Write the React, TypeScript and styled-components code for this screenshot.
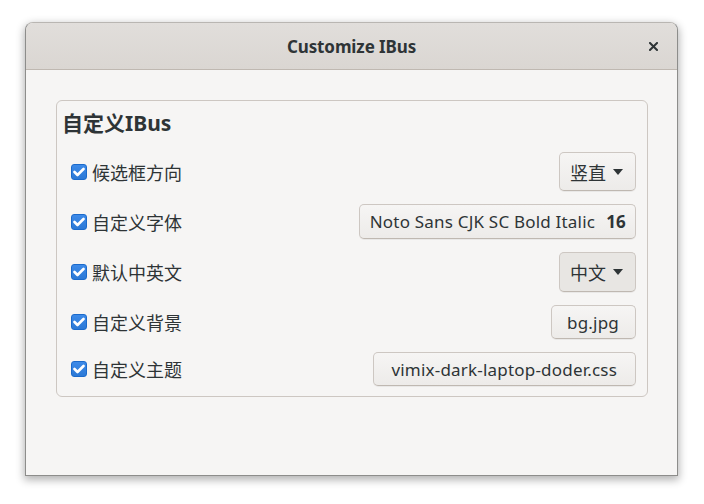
import React from "react";
import styled, { createGlobalStyle } from "styled-components";

const Global = createGlobalStyle`
  html, body { margin: 0; padding: 0; background: #ffffff; }
  body { font-family: "Noto Sans", "Noto Sans CJK SC", sans-serif; color: #2e3436; }
`;

const Stage = styled.div`
  width: 704px;
  height: 504px;
  padding: 22px 0 0 25px;
  box-sizing: border-box;
`;

const Window = styled.div`
  width: 653px;
  height: 454px;
  box-sizing: border-box;
  display: flex;
  flex-direction: column;
  background: #f6f5f4;
  border: 1px solid #8d8d8b;
  border-top-color: #b9b6b2;
  border-radius: 8px 8px 0 0;
  box-shadow: 0 3px 9px 1px rgba(0, 0, 0, 0.3);
  overflow: hidden;
`;

const TitleBar = styled.div`
  height: 47px;
  flex: none;
  position: relative;
  display: flex;
  align-items: center;
  justify-content: center;
  background: linear-gradient(#e1dedb, #dad6d2);
  border-bottom: 1px solid #bfb8b1;
  box-sizing: border-box;
`;

const Title = styled.div`
  font-family: "Noto Sans", sans-serif;
  font-weight: 700;
  font-size: 17px;
  color: #2e3436;
  letter-spacing: -0.1px;
`;

const CloseButton = styled.div`
  position: absolute;
  right: 19px;
  top: 19px;
  width: 9px;
  height: 9px;
  display: flex;
`;

const Content = styled.div`
  padding: 30px 29px 0 30px;
`;

const Frame = styled.div`
  border: 1px solid #cdc7c2;
  border-radius: 6px;
  padding: 0 11px 10px 5px;
  display: flex;
  flex-direction: column;
`;

const Heading = styled.div`
  font-family: "Noto Sans", "Noto Sans CJK SC", sans-serif;
  font-weight: 700;
  font-size: 21px;
  line-height: 28px;
  margin: 8px 0 15px 0;
  color: #2e3436;
`;

const Rows = styled.div`
  display: flex;
  flex-direction: column;
  gap: 13px;
`;

const Row = styled.div`
  display: flex;
  align-items: center;
  justify-content: space-between;
  padding-left: 9px;
`;

const CheckLabel = styled.label`
  display: flex;
  align-items: center;
  gap: 5px;
  font-family: "Noto Sans CJK SC", sans-serif;
  font-size: 18px;
  color: #2e3436;
`;

const Check = styled.span`
  width: 16px;
  height: 16px;
  box-sizing: border-box;
  border-radius: 3px;
  background: linear-gradient(#3d8ae8, #2c79d6);
  border: 1px solid #1b6acb;
  display: flex;
  align-items: center;
  justify-content: center;
`;

const Button = styled.div<{ $height: number; $pad: string; $pressed?: boolean }>`
  height: ${(p) => p.$height}px;
  box-sizing: border-box;
  padding: ${(p) => p.$pad};
  display: flex;
  align-items: center;
  gap: 7px;
  border: 1px solid #cdc7c2;
  border-bottom-color: #bfb8b1;
  border-radius: 5px;
  background: ${(p) => (p.$pressed ? "#e8e6e3" : "linear-gradient(#f6f5f4, #edebe9)")};
  box-shadow: 0 1px rgba(0, 0, 0, 0.05);
  font-family: "Noto Sans", "Noto Sans CJK SC", sans-serif;
  font-size: 17px;
  letter-spacing: 0.2px;
  color: #2e3436;
  white-space: nowrap;
`;

const CjkText = styled.span`
  font-family: "Noto Sans CJK SC", sans-serif;
  font-size: 18px;
  letter-spacing: 0;
`;

const Size = styled.span`
  font-weight: 700;
  margin-left: 4px;
`;

const Arrow = () => (
  <svg width="10" height="6" viewBox="0 0 10 6">
    <path d="M0 0 H10 L5 6 Z" fill="#2e3436" />
  </svg>
);

const Tick = () => (
  <svg width="12" height="10" viewBox="0 0 12 10">
    <path d="M1.5 5 L4.5 8 L10.5 2" stroke="#fff" strokeWidth="2.6" fill="none" strokeLinecap="round" strokeLinejoin="round" />
  </svg>
);

const Item = ({ label, children }: { label: string; children: React.ReactNode }) => (
  <Row>
    <CheckLabel>
      <Check>
        <Tick />
      </Check>
      {label}
    </CheckLabel>
    {children}
  </Row>
);

export default function App() {
  return (
    <Stage>
      <Global />
      <Window>
        <TitleBar>
          <Title>Customize IBus</Title>
          <CloseButton>
            <svg width="9" height="9" viewBox="0 0 9 9">
              <path d="M1 1 L8 8 M8 1 L1 8" stroke="#2e3436" strokeWidth="2" strokeLinecap="square" />
            </svg>
          </CloseButton>
        </TitleBar>
        <Content>
          <Frame>
            <Heading>自定义IBus</Heading>
            <Rows>
              <Item label="候选框方向">
                <Button $height={39} $pad="0 12px 0 10px">
                  <CjkText>竖直</CjkText>
                  <Arrow />
                </Button>
              </Item>
              <Item label="自定义字体">
                <Button $height={35} $pad="0 9px 0 10px">
                  Noto Sans CJK SC Bold Italic<Size>16</Size>
                </Button>
              </Item>
              <Item label="默认中英文">
                <Button $height={40} $pad="0 12px 0 10px" $pressed>
                  <CjkText>中文</CjkText>
                  <Arrow />
                </Button>
              </Item>
              <Item label="自定义背景">
                <Button $height={34} $pad="0 16px 0 15px">bg.jpg</Button>
              </Item>
              <Item label="自定义主题">
                <Button $height={34} $pad="0 18px 0 17px">vimix-dark-laptop-doder.css</Button>
              </Item>
            </Rows>
          </Frame>
        </Content>
      </Window>
    </Stage>
  );
}
